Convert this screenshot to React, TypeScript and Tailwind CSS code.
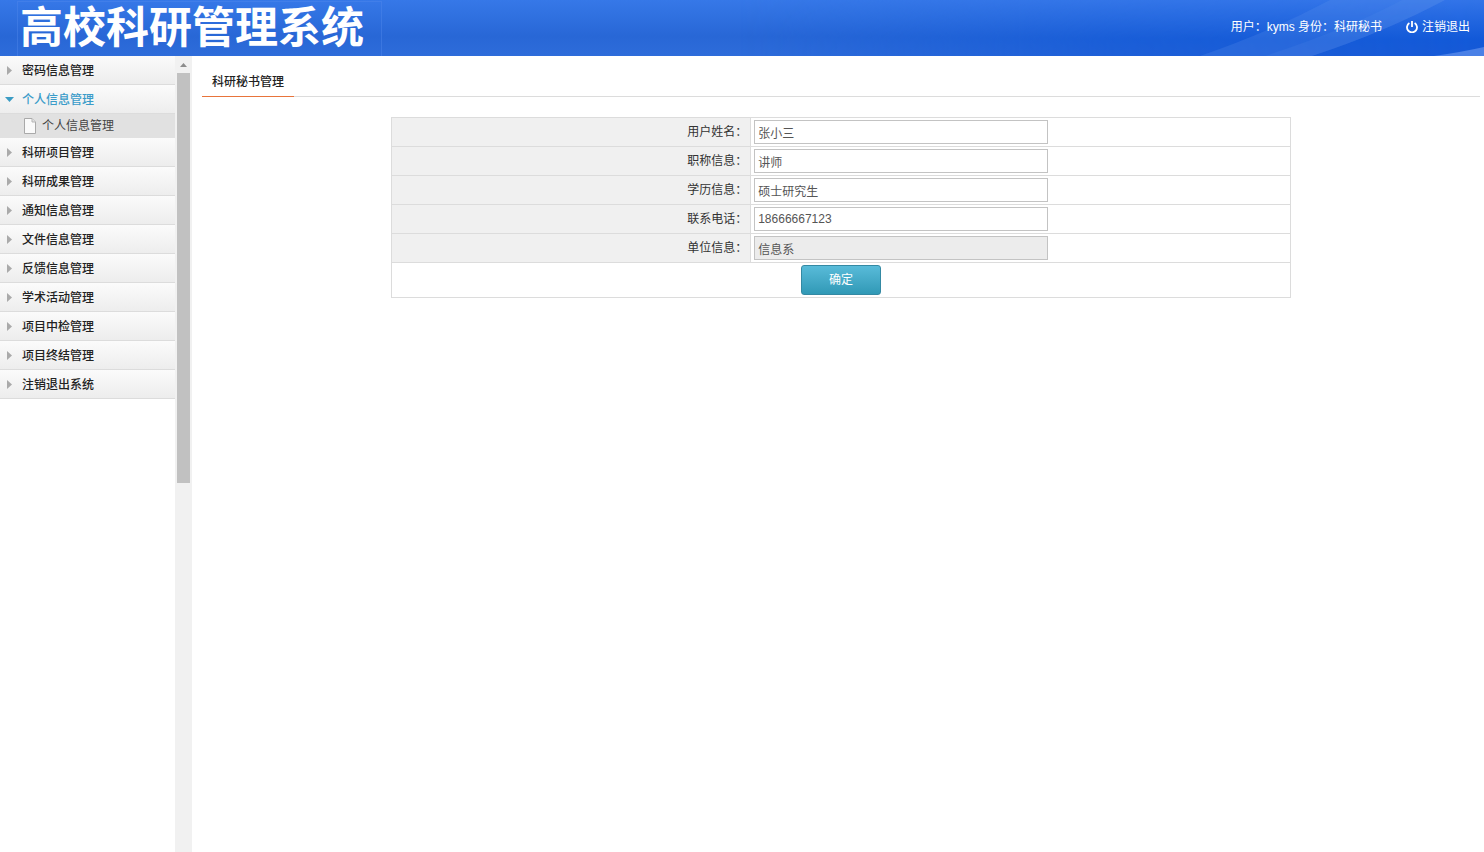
import { useState } from "react";

type MenuGroup = { title: string; children?: string[] };

const menu: MenuGroup[] = [
  { title: "密码信息管理" },
  { title: "个人信息管理", children: ["个人信息管理"] },
  { title: "科研项目管理" },
  { title: "科研成果管理" },
  { title: "通知信息管理" },
  { title: "文件信息管理" },
  { title: "反馈信息管理" },
  { title: "学术活动管理" },
  { title: "项目中检管理" },
  { title: "项目终结管理" },
  { title: "注销退出系统" },
];

type Field = { id: string; label: string; value: string; readOnly?: boolean };

const fields: Field[] = [
  { id: "name", label: "用户姓名：", value: "张小三" },
  { id: "title", label: "职称信息：", value: "讲师" },
  { id: "degree", label: "学历信息：", value: "硕士研究生" },
  { id: "phone", label: "联系电话：", value: "18666667123" },
  { id: "dept", label: "单位信息：", value: "信息系", readOnly: true },
];

function HeaderBackdrop() {
  return (
    <svg
      className="absolute inset-0 h-full w-full"
      viewBox="0 0 1484 56"
      preserveAspectRatio="none"
      aria-hidden="true"
    >
      <defs>
        <linearGradient id="base" x1="0" y1="0" x2="0" y2="1">
          <stop offset="0" stopColor="#3678e8" />
          <stop offset="0.65" stopColor="#2867d6" />
          <stop offset="1" stopColor="#2e6cda" />
        </linearGradient>
        <linearGradient id="deep" x1="0" y1="0" x2="0" y2="1">
          <stop offset="0" stopColor="#3274e8" />
          <stop offset="0.7" stopColor="#1259d8" />
          <stop offset="1" stopColor="#1659d6" />
        </linearGradient>
        <linearGradient id="fade" x1="0" y1="0" x2="1" y2="0">
          <stop offset="0" stopColor="#000000" />
          <stop offset="0.5" stopColor="#aaaaaa" />
          <stop offset="1" stopColor="#ffffff" />
        </linearGradient>
        <mask id="fadeMask">
          <rect x="740" width="744" height="56" fill="url(#fade)" />
        </mask>
      </defs>
      <rect width="1484" height="56" fill="url(#base)" />
      <rect x="740" width="744" height="56" fill="url(#deep)" mask="url(#fadeMask)" />
      <path d="M1200 56Q1270 32 1330 0H1445Q1385 32 1312 56Z" fill="#6a9af0" fillOpacity="0.2" />
      <path d="M1265 56Q1350 28 1402 0H1445Q1385 32 1312 56Z" fill="#6a9af0" fillOpacity="0.12" />
      <path d="M1434 56Q1462 52 1484 47V56Z" fill="#4a80e6" />
      <rect x="17.5" y="1.5" width="364" height="56" fill="none" stroke="#5088ec" strokeOpacity="0.45" />
    </svg>
  );
}

function PowerIcon() {
  return (
    <svg width="12" height="12" viewBox="0 0 12 12" fill="none" stroke="currentColor" strokeWidth="1.8" aria-hidden="true">
      <path d="M3.4 2.1A5 5 0 1 0 8.6 2.1" />
      <path d="M6 0V6" />
    </svg>
  );
}

function PageIcon() {
  return (
    <svg width="12" height="16" viewBox="0 0 12 16" aria-hidden="true">
      <path d="M.5.5H8L11.5 4V15.5H.5Z" fill="#fafafa" stroke="#a9a9a9" />
      <path d="M8 .5V4H11.5" fill="#e2e2e2" stroke="#b5b5b5" />
    </svg>
  );
}

function Arrow({ open }: { open: boolean }) {
  return open ? (
    <svg width="9" height="5" viewBox="0 0 9 5" aria-hidden="true">
      <path d="M0 0H9L4.5 5Z" fill="#3b9cc4" />
    </svg>
  ) : (
    <svg width="9" height="9" viewBox="0 0 9 9" aria-hidden="true">
      <path d="M2 0L7 4.5L2 9Z" fill="#aaaaaa" />
    </svg>
  );
}

function Sidebar() {
  const [openIndex, setOpenIndex] = useState(1);
  return (
    <aside className="flex w-48 shrink-0">
      <nav className="min-w-0 flex-1">
        {menu.map((group, i) => {
          const open = i === openIndex;
          return (
            <div key={group.title}>
              <button
                type="button"
                aria-expanded={open}
                onClick={() => setOpenIndex(i)}
                className={
                  "flex h-[29px] w-full items-center gap-2 border-b border-[#dcdcdc] bg-gradient-to-b from-[#fbfbfb] to-[#ededed] pl-[5px] text-left font-medium " +
                  (open ? "text-[#3b9cc9]" : "text-[#222222]")
                }
              >
                <Arrow open={open} />
                <span className="pt-0.5">{group.title}</span>
              </button>
              {open &&
                group.children?.map((child) => (
                  <a
                    key={child}
                    href="#profile"
                    className="flex h-6 items-center gap-1.5 bg-[#e1e1e1] pl-6 text-[#444444]"
                  >
                    <PageIcon />
                    {child}
                  </a>
                ))}
            </div>
          );
        })}
      </nav>
      <div className="flex w-[17px] shrink-0 flex-col items-center bg-[#f1f1f1]" aria-hidden="true">
        <div className="flex h-[17px] items-center">
          <svg width="7" height="4" viewBox="0 0 7 4">
            <path d="M0 4L3.5 0L7 4Z" fill="#8c8c8c" />
          </svg>
        </div>
        <div className="h-[410px] w-[13px] bg-[#c1c1c1]" />
      </div>
    </aside>
  );
}

function ProfileForm() {
  return (
    <form onSubmit={(e) => e.preventDefault()}>
      <table className="mx-auto w-full max-w-[900px] table-fixed border-separate border-spacing-0 border border-[#dcdcdc]">
        <colgroup>
          <col className="w-2/5" />
          <col className="w-3/5" />
        </colgroup>
        <tbody>
          {fields.map((f) => (
            <tr key={f.id}>
              <th
                scope="row"
                className="border-r border-b border-[#dcdcdc] bg-[#f0f0f0] px-[3px] py-0.5 text-right font-normal text-[#333333]"
              >
                <label htmlFor={f.id}>{f.label}</label>
              </th>
              <td className="border-b border-[#dcdcdc] px-[3px] py-0.5">
                <input
                  id={f.id}
                  type="text"
                  defaultValue={f.value}
                  readOnly={f.readOnly}
                  className={
                    "block h-6 w-[294px] max-w-full border border-[#c3c3c3] px-[3px] text-[#555555] outline-none " +
                    (f.readOnly ? "bg-[#ececec]" : "bg-white")
                  }
                />
              </td>
            </tr>
          ))}
          <tr>
            <td colSpan={2} className="py-0.5 text-center">
              <button
                type="submit"
                className="mx-auto block h-[30px] w-20 rounded-[3px] border border-[#3489a3] bg-gradient-to-b from-[#58bbd9] to-[#3099b6] text-white"
              >
                确定
              </button>
            </td>
          </tr>
        </tbody>
      </table>
    </form>
  );
}

export default function App() {
  return (
    <div className="flex min-h-screen flex-col bg-white font-['Liberation_Sans','Noto_Sans_CJK_SC',sans-serif] text-xs">
      <header className="relative h-14 bg-[#2e6cda] text-white">
        <HeaderBackdrop />
        <div className="relative flex h-full items-center justify-between pr-3.5 pl-5">
          <h1 className="text-[43px] leading-[56px] font-bold whitespace-nowrap">高校科研管理系统</h1>
          <div className="flex items-center gap-6 pb-[3px] whitespace-nowrap">
            <span>用户：kyms 身份：科研秘书</span>
            <a href="#logout" className="flex items-center gap-1">
              <PowerIcon />
              注销退出
            </a>
          </div>
        </div>
      </header>
      <div className="flex flex-1">
        <Sidebar />
        <main className="min-w-0 flex-1 pt-2.5 pr-1 pl-2.5">
          <div className="mb-5 flex h-[31px] border-b border-[#dcdcdc]">
            <h2 className="-mb-px flex h-[31px] items-center border-b border-[#e8743b] px-2.5 pt-0.5 font-medium text-[#222222]">
              科研秘书管理
            </h2>
          </div>
          <ProfileForm />
        </main>
      </div>
    </div>
  );
}
